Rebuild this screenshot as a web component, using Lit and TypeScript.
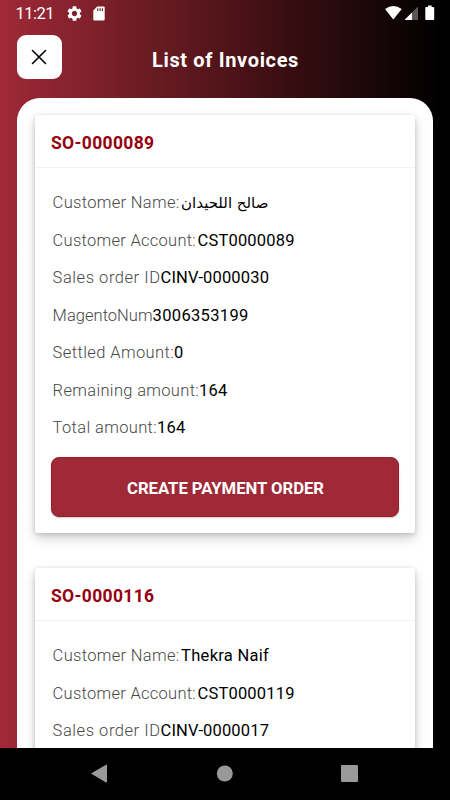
import { LitElement, html, css, svg, nothing } from "lit";
import { customElement, property, state } from "lit/decorators.js";
import { styleMap } from "lit/directives/style-map.js";

/** A single line of text whose tracking is adjusted to occupy a given width. */
@customElement("tracked-text")
class TrackedText extends LitElement {
  @property() text = "";
  @property({ type: Number }) width = 0;
  @state() private tracking = 0;

  static styles = css`
    :host { display: inline-block; white-space: pre; }
    .line { display: inline-block; }
  `;

  firstUpdated() {
    const line = this.renderRoot.querySelector(".line") as HTMLElement;
    const natural = line.getBoundingClientRect().width;
    this.tracking = (this.width - natural) / this.text.length;
  }

  render() {
    return html`<span class="line" style=${styleMap({ letterSpacing: this.tracking.toFixed(3) + "px" })}>${this.text}</span>`;
  }
}

interface Row { label: string; labelWidth: number; value: string; valueWidth: number; gap?: boolean; rtl?: boolean }
interface Invoice { id: string; rows: Row[]; payable: boolean }

const invoices: Invoice[] = [
  {
    id: "SO-0000089",
    payable: true,
    rows: [
      { label: "Customer Name:", labelWidth: 127, value: "صالح اللحيدان", valueWidth: 88, gap: true, rtl: true },
      { label: "Customer Account:", labelWidth: 143.5, value: "CST0000089", valueWidth: 97, gap: true },
      { label: "Sales order ID", labelWidth: 108, value: "CINV-0000030", valueWidth: 108.5 },
      { label: "MagentoNum", labelWidth: 100, value: "3006353199", valueWidth: 96 },
      { label: "Settled Amount:", labelWidth: 121.5, value: "0", valueWidth: 10 },
      { label: "Remaining amount:", labelWidth: 146.5, value: "164", valueWidth: 28.5 },
      { label: "Total amount:", labelWidth: 104.5, value: "164", valueWidth: 28.5 },
    ],
  },
  {
    id: "SO-0000116",
    payable: false,
    rows: [
      { label: "Customer Name:", labelWidth: 127, value: "Thekra Naif", valueWidth: 88, gap: true },
      { label: "Customer Account:", labelWidth: 143.5, value: "CST0000119", valueWidth: 97, gap: true },
      { label: "Sales order ID", labelWidth: 108, value: "CINV-0000017", valueWidth: 108.5 },
    ],
  },
];

@customElement("invoice-card")
class InvoiceCard extends LitElement {
  @property({ attribute: false }) invoice!: Invoice;

  static styles = css`
    :host {
      display: block;
      box-sizing: border-box;
      height: 418px;
      background: #fff;
      border-radius: 3px;
      box-shadow: 0 5px 12px rgba(0, 0, 0, 0.2), 0 1px 4px rgba(0, 0, 0, 0.14);
    }
    .head {
      box-sizing: border-box;
      height: 53px;
      padding: 4px 16px 0;
      display: flex;
      align-items: center;
      border-bottom: 1px solid #f2f2f2;
      color: #960010;
      font-size: 17.5px;
      font-weight: 700;
    }
    .rows { padding: 16px 17.6px 0; }
    .row {
      height: 37.5px;
      display: flex;
      align-items: center;
      font-size: 16.5px;
      white-space: pre;
    }
    .label { color: #484848; font-weight: 300; }
    .gap { margin-right: 1.5px; }
    .value { color: #000; }
    .rtl { font-family: "DejaVu Sans", sans-serif; font-size: 15px; }
    .pay {
      display: flex;
      align-items: center;
      justify-content: center;
      box-sizing: border-box;
      width: 348px;
      height: 60px;
      margin: 10px 16px 0;
      padding: 4px 0 0 1px;
      border: 1px solid #9b1a2b;
      border-radius: 8px;
      background: #a02937;
      box-shadow: 0 1px 2px rgba(0, 0, 0, 0.22);
      color: #fff;
      font: 700 16.7px Roboto, sans-serif;
    }
  `;

  render() {
    const { id, rows, payable } = this.invoice;
    return html`
      <div class="head"><tracked-text .text=${id} .width=${103.5}></tracked-text></div>
      <div class="rows">
        ${rows.map((r) => html`
          <div class="row"><tracked-text class=${r.gap ? "label gap" : "label"} .text=${r.label} .width=${r.labelWidth}></tracked-text>${r.rtl
              ? html`<span class="rtl" dir="rtl">${r.value}</span>`
              : html`<tracked-text class="value" .text=${r.value} .width=${r.valueWidth}></tracked-text>`}</div>`)}
      </div>
      ${payable
        ? html`<button class="pay"><tracked-text .text=${"CREATE PAYMENT ORDER"} .width=${197}></tracked-text></button>`
        : nothing}
    `;
  }
}

const gear = svg`<path fill="#fff" d="M19.14 12.94c.04-.3.06-.61.06-.94 0-.32-.02-.64-.07-.94l2.03-1.58c.18-.14.23-.41.12-.61l-1.92-3.32c-.12-.22-.37-.29-.59-.22l-2.39.96c-.5-.38-1.03-.7-1.62-.94l-.36-2.54c-.04-.24-.24-.41-.48-.41h-3.84c-.24 0-.43.17-.47.41l-.36 2.54c-.59.24-1.13.57-1.62.94l-2.39-.96c-.22-.08-.47 0-.59.22L2.74 8.87c-.12.21-.08.47.12.61l2.03 1.58c-.05.3-.09.63-.09.94s.02.64.07.94l-2.03 1.58c-.18.14-.23.41-.12.61l1.92 3.32c.12.22.37.29.59.22l2.39-.96c.5.38 1.03.7 1.62.94l.36 2.54c.05.24.24.41.48.41h3.84c.24 0 .44-.17.47-.41l.36-2.54c.59-.24 1.13-.56 1.62-.94l2.39.96c.22.08.47 0 .59-.22l1.92-3.32c.12-.22.07-.47-.12-.61l-2.01-1.58zM12 15.6c-1.98 0-3.6-1.62-3.6-3.6s1.62-3.6 3.6-3.6 3.6 1.62 3.6 3.6-1.62 3.6-3.6 3.6z"/>`;

@customElement("app-root")
class AppRoot extends LitElement {
  static styles = css`
    :host {
      display: flex;
      flex-direction: column;
      width: 450px;
      height: 800px;
      overflow: hidden;
      font-family: Roboto, sans-serif;
      background: linear-gradient(90deg, #a22937 0, #982734 20px, #501419 225px, #000 440px);
    }
    svg { display: block; }
    .status {
      display: flex;
      align-items: center;
      flex: none;
      height: 26px;
      padding: 0 15px 0 15.5px;
      color: #fff;
      font-size: 16.5px;
    }
    .clock { width: 51px; padding-top: 1px; }
    .gear { margin-right: 11px; }
    .spacer { flex: 1; }
    .bar {
      flex: none;
      height: 72px;
      box-sizing: border-box;
      padding: 9px 17px 0;
      display: grid;
      grid-template-columns: 45px 1fr 45px;
      align-items: start;
    }
    .close {
      width: 45px;
      height: 44px;
      padding: 0 1px 0 0;
      border: 0;
      border-radius: 9px;
      background: #fff;
      display: grid;
      place-items: center;
    }
    .title {
      margin: 0;
      padding: 13px 0 0 1px;
      text-align: center;
      color: #fff;
      font-size: 20px;
      line-height: 24px;
      font-weight: 700;
    }
    .sheet {
      flex: 1;
      min-height: 0;
      overflow: hidden;
      box-sizing: border-box;
      width: 416px;
      margin-left: 17px;
      padding: 17px 18px 0;
      border-radius: 23px 23px 0 0;
      background: #fff;
      display: flex;
      flex-direction: column;
      gap: 35px;
    }
    invoice-card { flex: none; }
    .nav { flex: none; height: 52px; background: #000; }
  `;

  render() {
    return html`
      <div class="status">
        <span class="clock"><tracked-text .text=${"11:21"} .width=${38.5}></tracked-text></span>
        <svg class="gear" width="15" height="15" viewBox="2.4 2 19.2 20">${gear}</svg>
        <svg width="12" height="15" viewBox="0 0 12 15">
          <path fill="#fff" d="M4.2.5H10.6Q11.7.5 11.7 1.6V13.4Q11.7 14.5 10.6 14.5H1.4Q.3 14.5.3 13.4V4.5Z"/>
          <path stroke="#5c1e27" stroke-width="1.1" d="M4.8 2.2V5M7.1 2.2V5M9.4 2.2V5"/>
        </svg>
        <span class="spacer"></span>
        <svg width="51" height="16" viewBox="0 0 51 16">
          <path fill="#fff" d="M1 3.9Q9.3-1.9 17.7 3.9L9.3 14.5Z"/>
          <path fill="#5b5556" d="M34 1.5V15H20.5Z"/>
          <path fill="#fff" d="M28 7.5V15H20.5Z"/>
          <path fill="#fff" d="M44 .5H47.6V2H49.3Q50.2 2 50.2 2.9V14.1Q50.2 15 49.3 15H42.2Q41.3 15 41.3 14.1V2.9Q41.3 2 42.2 2H44Z"/>
        </svg>
      </div>
      <div class="bar">
        <button class="close" aria-label="Close">
          <svg width="16" height="16" viewBox="0 0 16 16"><path stroke="#000" stroke-width="1.6" stroke-linecap="round" d="M1.5 1.5L14.5 14.5M14.5 1.5L1.5 14.5"/></svg>
        </button>
        <h1 class="title"><tracked-text .text=${"List of Invoices"} .width=${147}></tracked-text></h1>
      </div>
      <main class="sheet">
        ${invoices.map((i) => html`<invoice-card .invoice=${i}></invoice-card>`)}
      </main>
      <nav class="nav">
        <svg width="450" height="52" viewBox="0 0 450 52" fill="#999">
          <path d="M91 25.5L106 16.8Q107 16.4 107 17.3V33.8Q107 35 106 34.4Z"/>
          <circle cx="224.8" cy="25.5" r="8"/>
          <rect x="341" y="17" width="17" height="17" rx="1.3"/>
        </svg>
      </nav>
    `;
  }
}
